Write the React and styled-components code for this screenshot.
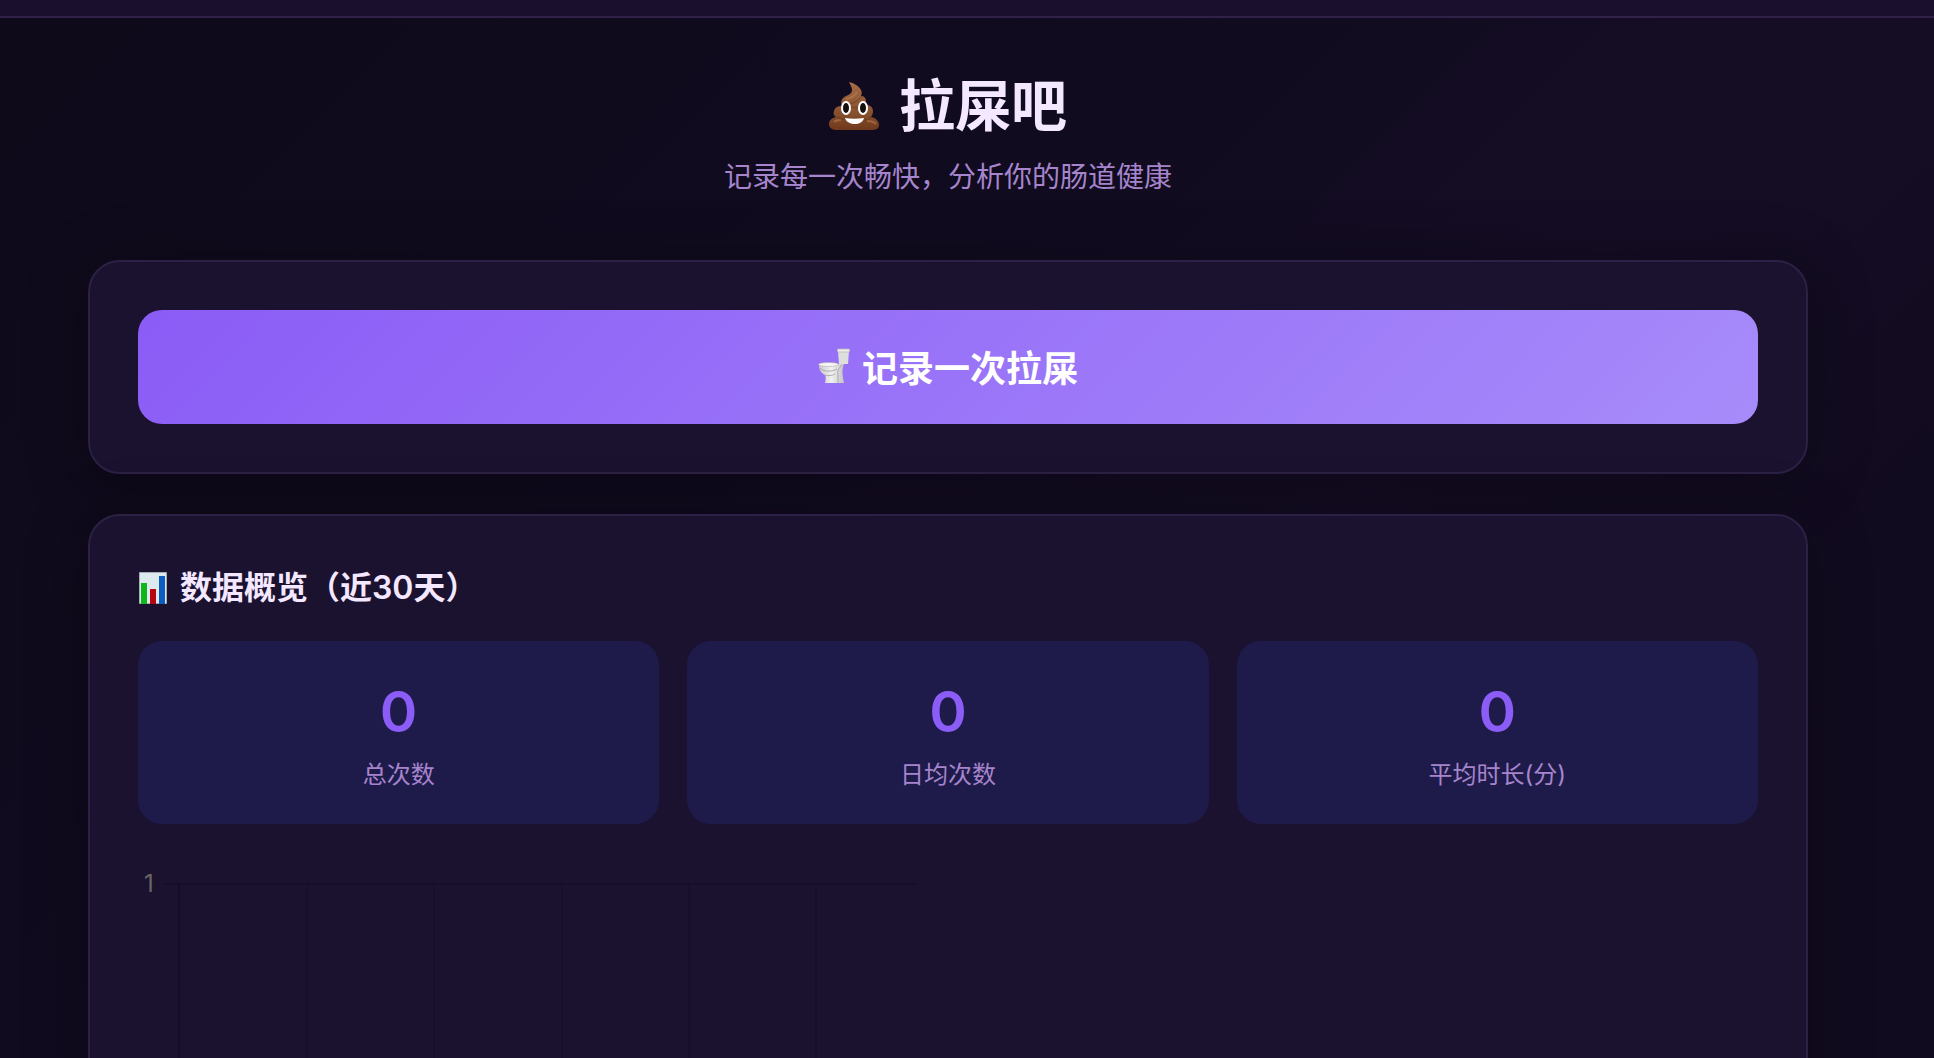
import React from 'react'
import styled, { createGlobalStyle } from 'styled-components'

const GlobalStyle = createGlobalStyle`
    * {
        box-sizing: border-box;
    }
    body {
        margin: 0;
        background: #0f0a1e;
        color: #f3e8ff;
        font-family: Inter, "Noto Sans CJK SC", sans-serif;
    }
`

const Page = styled.div`
    height: 100vh;
    overflow: hidden;
    padding-right: 38px;
    background: linear-gradient(135deg, #0f0a1a 0%, #100b1f 40%, #150d24 62%, #110b1f 85%, #110b1f 100%);
`

const TopBar = styled.div`
    height: 18px;
    margin-right: -38px;
    background: #1a102e;
    border-bottom: 2px solid #2f2147;
`

const Container = styled.main`
    max-width: 1800px;
    margin: 0 auto;
    padding: 48px 40px;
`

const Header = styled.header`
    text-align: center;
    margin-bottom: 62px;
`

const Title = styled.h1`
    display: flex;
    align-items: center;
    justify-content: center;
    gap: 20px;
    margin: 0 0 10px;
    font-size: 56px;
    line-height: 80px;
`

const Subtitle = styled.p`
    margin: 0;
    color: #a685cc;
    font-size: 28px;
    line-height: 42px;
`

const Card = styled.section`
    margin-bottom: 40px;
    padding: 48px;
    background: #1b1230;
    border: 2px solid #2c2144;
    border-radius: 32px;
    box-shadow: 0 8px 64px rgba(0, 0, 0, .3);
`

const RecordButton = styled.button`
    display: flex;
    align-items: center;
    justify-content: center;
    gap: 12px;
    width: 100%;
    height: 114px;
    padding: 0 0 2px;
    border: 0;
    border-radius: 24px;
    background: linear-gradient(135deg, #8b5cf6, #a78bfa);
    color: #fff;
    font-family: inherit;
    font-size: 36px;
    font-weight: 700;
    cursor: pointer;
`

const CardTitle = styled.h2`
    display: flex;
    align-items: center;
    gap: 12px;
    margin: 0 0 30px;
    font-size: 32px;
    font-weight: 600;
    line-height: 47px;
`

const Stats = styled.div`
    display: grid;
    grid-template-columns: repeat(3, 1fr);
    gap: 28px;
    margin-bottom: 40px;
`

const Stat = styled.div`
    padding: 32px;
    border-radius: 24px;
    background: #1e1b4b;
    text-align: center;
`

const StatValue = styled.div`
    color: #8b5cf6;
    font-size: 57px;
    font-weight: 600;
    line-height: 77px;
`

const StatLabel = styled.div`
    margin-top: 8px;
    color: #a685cc;
    font-size: 24px;
    line-height: 34px;
`

const Chart = styled.svg`
    display: block;
    width: 800px;
    height: 400px;
    font-size: 24px;
`

const PoopIcon = () => (
    <svg width="50" height="52" viewBox="0 0 50 52" aria-hidden="true">
        <defs>
            <linearGradient id="poop" x1="0" y1="0" x2="0" y2="1">
                <stop offset="0" stopColor="#a56c45" />
                <stop offset=".6" stopColor="#895231" />
                <stop offset="1" stopColor="#70391b" />
            </linearGradient>
        </defs>
        <path fill="url(#poop)" d="M20 2c5 1 10 4 12 8 1 2 1 4 0 6 3 0 5 2 5 5 0 2-1 3-2 4 5-1 9 2 9 6 0 3-1 5-2 6 5 1 8 4 8 8s-3 5-8 5H9c-6 0-9-2-9-6s3-6 7-7c-2-1-3-3-2-6 1-4 4-5 8-5-2-5 0-8 4-10 3-1 6-3 6-6 0-2-1-4-3-8z" />
        <path fill="none" stroke="#633315" strokeWidth="1" opacity=".6" d="M14 24c7 1 15-2 19-8M14 26c8 2 17 2 22-1M8 37c5 3 9 3 13 1M42 37c-3 3-7 4-11 2" />
        <path fill="none" stroke="#bd835a" strokeWidth="2" opacity=".5" d="M17 19c5-1 9-3 11-7M5 42c2-2 5-2 7-2M38 41c4 0 7 1 9 3" />
        <ellipse cx="17" cy="28" rx="5" ry="7" fill="#fff" />
        <ellipse cx="34" cy="28" rx="5" ry="7" fill="#fff" />
        <ellipse cx="17" cy="28" rx="3" ry="5" fill="#16100c" />
        <ellipse cx="34" cy="28" rx="3" ry="5" fill="#16100c" />
        <path fill="#fff" d="M16 38c6 1 13 1 19 0-1 4-5 6-9 6s-9-2-10-6z" />
    </svg>
)

const ToiletIcon = () => (
    <svg width="32" height="36" viewBox="0 0 32 36" aria-hidden="true">
        <defs>
            <linearGradient id="china" x1="0" y1="0" x2="1" y2="0">
                <stop offset="0" stopColor="#c9c9cb" />
                <stop offset=".5" stopColor="#f0f0f0" />
                <stop offset="1" stopColor="#c4c4c6" />
            </linearGradient>
        </defs>
        <path fill="#dededf" d="M20 3h11l-1 13h-9z" />
        <path fill="#ececec" stroke="#b5b5b7" strokeWidth=".7" d="M19.500 1h12v3h-12z" />
        <path fill="url(#china)" d="M18 16h8c-2 5-2 10 0 19H7c1-4 1-6 0-8-4-2-6-5-6-10z" />
        <path fill="none" stroke="#9e9ea0" strokeWidth=".8" d="M2 20c3 4 12 4 17 1M24 17c-4 4-5 7-4 10v8M7 27c3 1 7 1 10-1" />
        <ellipse cx="10.500" cy="16.500" rx="10" ry="2" fill="#f6f6f6" stroke="#b4b4b6" strokeWidth=".7" />
    </svg>
)

const BarsIcon = () => (
    <svg width="30" height="34" viewBox="0 0 30 34" aria-hidden="true">
        <path fill="#dce9ef" stroke="#a5adb4" d="M1.500 1.500h27v31h-27z" />
        <path fill="#0fb51a" d="M3 12h6v21H3z" />
        <path fill="#b50612" d="M12 18h6v15h-6z" />
        <path fill="#0b5ec0" d="M21 5h6v28h-6z" />
    </svg>
)

const stats = [
    { value: 0, label: '总次数' },
    { value: 0, label: '日均次数' },
    { value: 0, label: '平均时长(分)' },
]

const gridLines = [41, 169, 296, 424, 551, 678]

const App = () => (
    <>
        <GlobalStyle />
        <Page>
            <TopBar />
            <Container>
                <Header>
                    <Title><PoopIcon />拉屎吧</Title>
                    <Subtitle>记录每一次畅快，分析你的肠道健康</Subtitle>
                </Header>
                <Card>
                    <RecordButton type="button"><ToiletIcon />记录一次拉屎</RecordButton>
                </Card>
                <Card>
                    <CardTitle><BarsIcon />数据概览（近30天）</CardTitle>
                    <Stats>
                        {stats.map(s => (
                            <Stat key={s.label}>
                                <StatValue>{s.value}</StatValue>
                                <StatLabel>{s.label}</StatLabel>
                            </Stat>
                        ))}
                    </Stats>
                    <Chart viewBox="0 0 800 400">
                        <text x="6" y="28" fill="#666">1</text>
                        <path d="M26 20H780" stroke="#000" strokeOpacity=".12" strokeWidth="2" />
                        {gridLines.map((x, i) => (
                            <path key={x} d={`M${x} 20V400`} stroke="#000" strokeOpacity={i ? .1 : .25} strokeWidth="2" />
                        ))}
                    </Chart>
                </Card>
            </Container>
        </Page>
    </>
)

export default App
